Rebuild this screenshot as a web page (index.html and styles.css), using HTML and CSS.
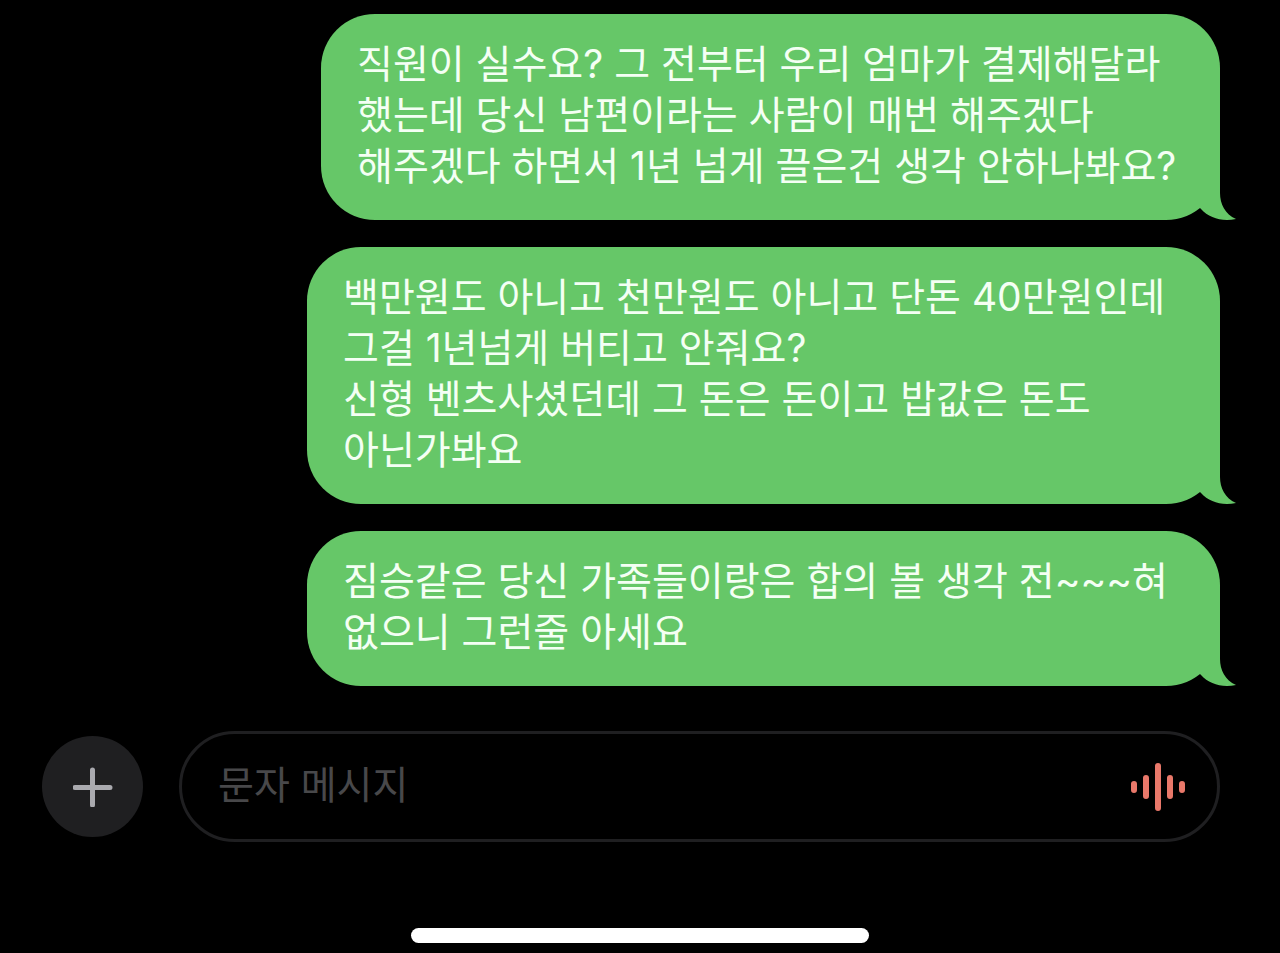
FILE: index.html
```html
<!DOCTYPE html>
<html lang="ko">
<head>
<meta charset="UTF-8">
<meta name="viewport" content="width=device-width, initial-scale=1.0">
<title>문자 메시지</title>
<link rel="stylesheet" href="styles.css">
</head>
<body>

<main class="messages">
  <div class="bubble">
    <p>직원이 실수요? 그 전부터 우리 엄마가 결제해달라<br>했는데 당신 남편이라는 사람이 매번 해주겠다<br>해주겠다 하면서 1년 넘게 끌은건 생각 안하나봐요?</p>
    <svg class="tail" viewBox="0 0 40 60" aria-hidden="true"><path d="M0 0H23V32C23 43 28 53 39 58C25 61 12 57 4 48L0 44Z"/></svg>
  </div>
  <div class="bubble">
    <p>백만원도 아니고 천만원도 아니고 단돈 40만원인데 그걸 1년넘게 버티고 안줘요?<br>신형 벤츠사셨던데 그 돈은 돈이고 밥값은 돈도 아닌가봐요</p>
    <svg class="tail" viewBox="0 0 40 60" aria-hidden="true"><path d="M0 0H23V32C23 43 28 53 39 58C25 61 12 57 4 48L0 44Z"/></svg>
  </div>
  <div class="bubble">
    <p>짐승같은 당신 가족들이랑은 합의 볼 생각 전~~~혀 없으니 그런줄 아세요</p>
    <svg class="tail" viewBox="0 0 40 60" aria-hidden="true"><path d="M0 0H23V32C23 43 28 53 39 58C25 61 12 57 4 48L0 44Z"/></svg>
  </div>
</main>

<form class="composer">
  <button class="add-btn" type="button" aria-label="추가">
    <svg viewBox="0 0 40 40" aria-hidden="true"><path d="M19.500 3V38M2 20.500H37"/></svg>
  </button>
  <div class="field">
    <input type="text" placeholder="문자 메시지" aria-label="문자 메시지">
    <button class="voice-btn" type="button" aria-label="음성 입력">
      <svg viewBox="0 0 56 48" aria-hidden="true"><path d="M4 21V27M16 15V33M28 3V45M40 15V33M52 21V27"/></svg>
    </button>
  </div>
</form>

<div class="home-bar"></div>

</body>
</html>
```
FILE: styles.css
```css
* {
  box-sizing: border-box;
}

body {
  margin: 0;
  min-height: 100vh;
  padding: 14px 0 10px;
  display: flex;
  flex-direction: column;
  background: #000;
  font-family: Inter, "Noto Sans CJK KR", sans-serif;
}

.messages {
  display: flex;
  flex-direction: column;
  align-items: flex-end;
  gap: 27px;
  padding: 0 60px 0 42px;
}

.bubble {
  position: relative;
  min-width: 899px;
  max-width: 913px;
  padding: 24px 36px 29px;
  border-radius: 54px;
  background: #66c768;
  color: #f4fff4;
}

.bubble p {
  margin: 0;
  font-size: 39px;
  font-weight: 400;
  line-height: 51px;
  word-break: keep-all;
}

.tail {
  position: absolute;
  right: -17px;
  bottom: -1px;
  width: 40px;
  height: 60px;
  fill: #66c768;
}

.composer {
  display: flex;
  align-items: center;
  gap: 36px;
  margin-top: 45px;
  padding: 0 60px 0 42px;
}

button {
  padding: 0;
  border: none;
  background: none;
  cursor: pointer;
}

.add-btn {
  display: flex;
  align-items: center;
  justify-content: center;
  width: 101px;
  height: 101px;
  border-radius: 50%;
  background: #1f1f21;
}

.add-btn svg {
  width: 40px;
  height: 40px;
  stroke: #a9a9ae;
  stroke-width: 5;
  stroke-linecap: round;
}

.field {
  flex: 1;
  display: flex;
  align-items: center;
  height: 111px;
  padding: 0 31px 0 36px;
  border: 3px solid #1f1f21;
  border-radius: 56px;
}

.field input {
  flex: 1;
  min-width: 0;
  padding: 0 0 4px;
  border: none;
  outline: none;
  background: none;
  color: #fff;
  font-family: inherit;
  font-size: 39px;
  font-weight: 400;
}

.field input::placeholder {
  color: #48484a;
}

.voice-btn svg {
  display: block;
  width: 56px;
  height: 48px;
  stroke: #e9786a;
  stroke-width: 6;
  stroke-linecap: round;
}

.home-bar {
  width: 458px;
  height: 15px;
  margin: auto auto 0;
  border-radius: 8px;
  background: #fff;
}
```
